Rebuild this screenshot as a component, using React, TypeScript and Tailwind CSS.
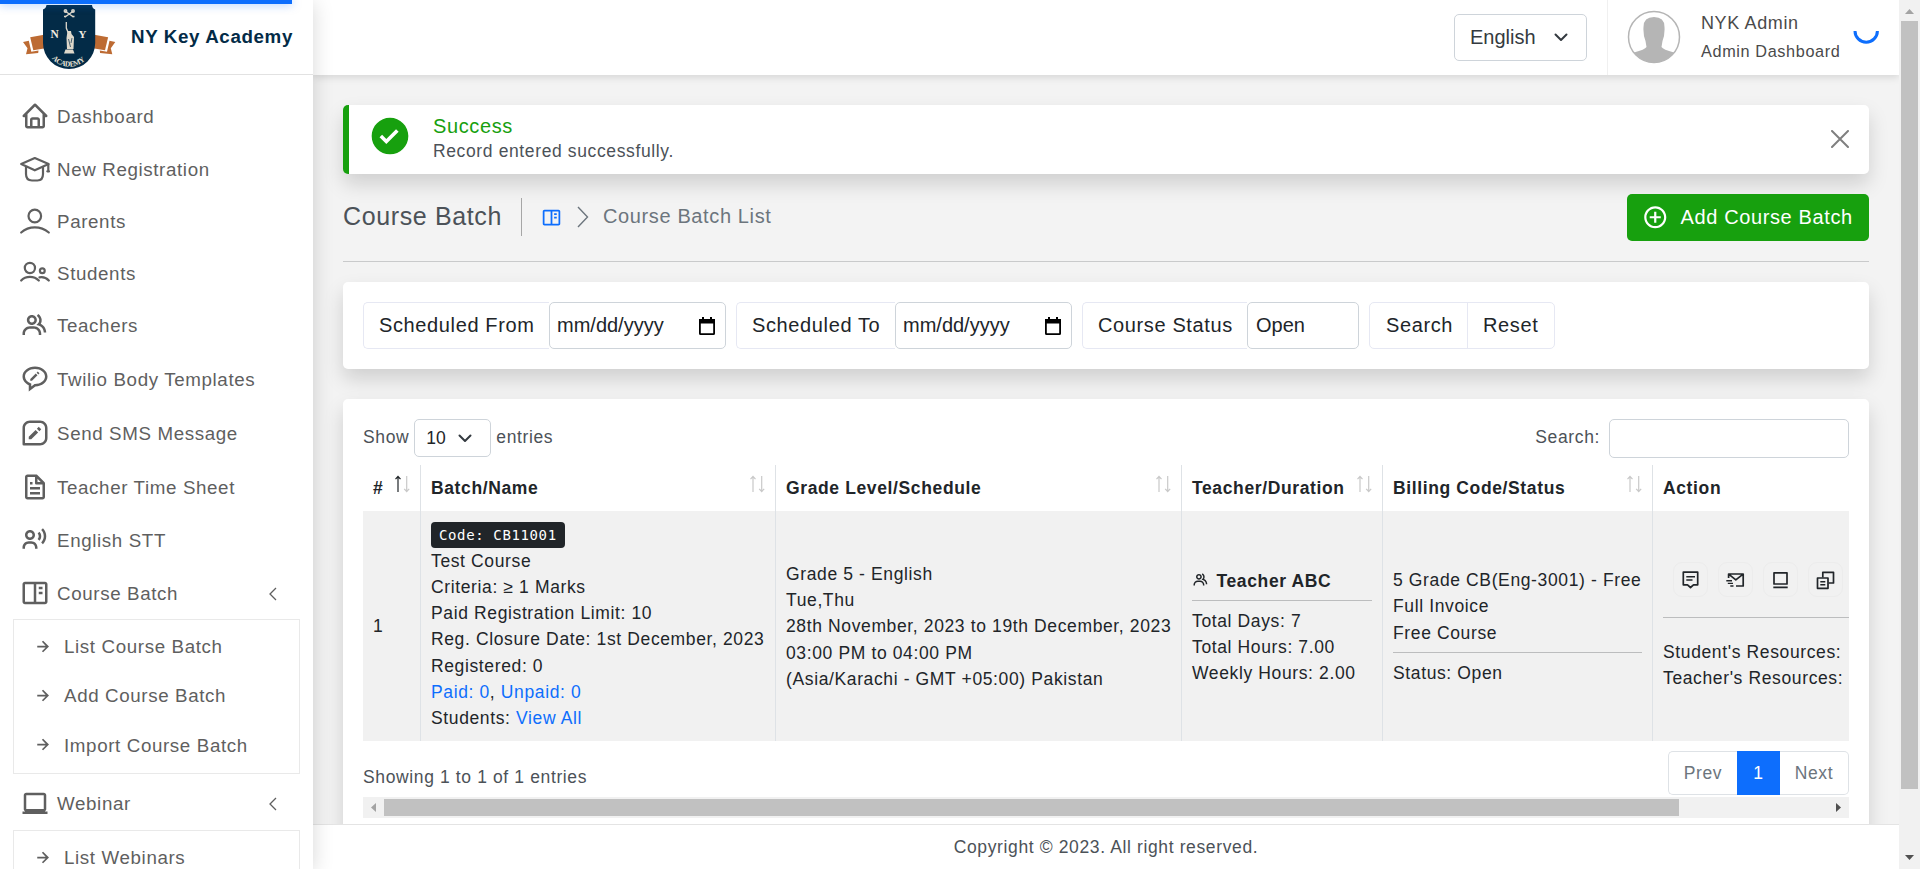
import type { ReactNode } from 'react';
import {
  BiHome,
  BiGroup,
  BiFile,
  BiUserVoice,
  BiBookContent,
  BiLaptop,
  BiRightArrowAlt,
  BiSolidCheckCircle,
  BiPlusCircle,
} from 'react-icons/bi';

const SHADOW = 'shadow-[0_10px_20px_rgba(0,0,0,0.15)]';

function Ribbon() {
  return (
    <g fill="#bd6b33">
      <path d="M8.200 32.300 L22 29.700 V43.500 L11.300 45.200Z" />
      <path d="M1 37 L6.800 35.800 L9.300 46.800 L16.500 45.600 L16.200 48 L4 49.300 L5.500 43.300Z" />
    </g>
  );
}

function Logo() {
  return (
    <svg width="95" height="66" viewBox="0 0 95 66" className="block">
      <Ribbon />
      <g transform="translate(94.3 0) scale(-1 1)">
        <Ribbon />
      </g>
      <path d="M24.500 0 H70 Q70.300 3.500 73.200 4.500 V38 A26.100 26 0 0 1 21 38 V4.500 Q24 3.500 24.500 0Z" fill="#032b47" />
      <g stroke="#ded8cb" fill="none" strokeWidth="1.500">
        <path d="M43 6 L51.500 12 M51.500 6 L43 12" />
        <circle cx="43.500" cy="6" r="1.200" />
        <circle cx="51" cy="6" r="1.200" />
        <path d="M42 11.500 h2 M50.500 11.500 h2" />
        <path d="M44.300 17 v6 l2 5" strokeWidth="1.300" />
      </g>
      <path d="M45.500 26 l3.500 0 l0.500 3 l2.500 3 l-0.500 12 h-6.500 l-0.500 -11z" fill="#ded8cb" />
      <path d="M43.500 44.500 h7.500 l1.500 4 h-10.500z" fill="#ded8cb" />
      <path d="M46.500 34 l2 8 M50 33 l-1 5" stroke="#032b47" strokeWidth="0.700" />
      <text x="28.500" y="33" fontFamily="Liberation Serif, serif" fontWeight="700" fontSize="11.500" fill="#f1ece0" letterSpacing="0">N</text>
      <text x="56.500" y="33" fontFamily="Liberation Serif, serif" fontWeight="700" fontSize="11" fill="#f1ece0" letterSpacing="0">Y</text>
      <path id="logo-arc" d="M30 53.500 A21.500 20 0 0 0 64.500 53.500" fill="none" />
      <text fontFamily="Liberation Serif, serif" fontWeight="700" fontSize="7.500" fill="#e6e1d5" letterSpacing="0">
        <textPath href="#logo-arc" startOffset="0" textLength="37">ACADEMY</textPath>
      </text>
    </svg>
  );
}

function LineIcon({ children }: { children: ReactNode }) {
  return (
    <svg width="30" height="30" viewBox="0 0 30 30" fill="none" stroke="currentColor" strokeWidth="2.200" strokeLinecap="round" strokeLinejoin="round">
      {children}
    </svg>
  );
}

const Cap = () => (
  <LineIcon>
    <path d="M1.200 10 L14.800 4 L28.600 10 L14.800 16.300Z" />
    <path d="M6 13 V20 Q6 26.500 12 26.500 H17.500 Q23 26.500 23 20 V13" />
    <path d="M28.300 10.500 V16.500 M27.300 17.300 H29" />
  </LineIcon>
);
const Parent = () => (
  <LineIcon>
    <circle cx="14.800" cy="10" r="6.300" />
    <path d="M1.200 26.500 Q7 21.300 14.800 21.300 Q22.600 21.300 28.800 26.500" />
  </LineIcon>
);
const Pupils = () => (
  <LineIcon>
    <circle cx="9.900" cy="10" r="5.100" />
    <circle cx="22.300" cy="12.700" r="2.400" />
    <path d="M1.200 22.500 Q4.500 18.800 9.900 18.800 Q15.300 18.800 18.800 22.500" />
    <path d="M19.500 19.300 Q25 18.300 28.800 22.500" />
  </LineIcon>
);
const BubbleEdit = () => (
  <svg width="30" height="30" viewBox="0 0 24 24" fill="currentColor">
    <path d="M12 2C6.486 2 2 5.589 2 10c0 2.908 1.898 5.515 5 6.934V22l5.340-4.004C17.697 17.852 22 14.320 22 10c0-4.411-4.486-8-10-8zm0 14h-.333L9 18v-2.417l-.641-.247C5.671 14.301 4 12.256 4 10c0-3.309 3.589-6 8-6s8 2.691 8 6-3.589 6-8 6z" />
    <path d="M8.200 13.300v-1.400l4.400-4.400 1.400 1.400-4.400 4.400zM13.300 6.900l.9-.9 1.400 1.400-.9.9z" />
  </svg>
);
const SquareEdit = () => (
  <svg width="30" height="30" viewBox="0 0 24 24" fill="currentColor">
    <path d="M16 2H8C4.691 2 2 4.691 2 8v13a1 1 0 0 0 1 1h13c3.309 0 6-2.691 6-6V8c0-3.309-2.691-6-6-6zm4 14c0 2.206-1.794 4-4 4H4V8c0-2.206 1.794-4 4-4h8c2.206 0 4 1.794 4 4v8z" />
    <path d="M7 15v2h2l5.500-5.500-2-2zM13.500 8.500l1.500-1.500 2 2-1.500 1.500z" />
  </svg>
);

type Item = { label: string; icon: ReactNode; box: string };
const items: Item[] = [
  { label: 'Dashboard', icon: <BiHome size={30} />, box: 'h-[53px]' },
  { label: 'New Registration', icon: <Cap />, box: 'h-[52.5px]' },
  { label: 'Parents', icon: <Parent />, box: 'h-[51.5px]' },
  { label: 'Students', icon: <Pupils />, box: 'h-[52.5px]' },
  { label: 'Teachers', icon: <BiGroup size={30} />, box: 'h-[52px]' },
  { label: 'Twilio Body Templates', icon: <BubbleEdit />, box: 'h-[56px]' },
  { label: 'Send SMS Message', icon: <SquareEdit />, box: 'h-[52px]' },
  { label: 'Teacher Time Sheet', icon: <BiFile size={30} />, box: 'h-[55.5px]' },
  { label: 'English STT', icon: <BiUserVoice size={30} />, box: 'h-[51px]' },
];

function NavRow({ label, icon, box, chevron }: Item & { chevron?: boolean }) {
  return (
    <div className={`flex shrink-0 items-center pr-9 pl-5 ${box}`}>
      <span className="mb-px w-[37px] shrink-0">{icon}</span>
      <span className={chevron ? 'grow whitespace-nowrap' : 'grow pt-[2px] whitespace-nowrap'}>{label}</span>
      {chevron && (
        <svg width="9" height="14" viewBox="0 0 9 14" fill="none" stroke="currentColor" strokeWidth="1.300">
          <path d="M8 1 L2 7 L8 13" />
        </svg>
      )}
    </div>
  );
}

function SubMenu({ labels }: { labels: string[] }) {
  return (
    <div className="mr-[13px] ml-[13px] shrink-0 border border-[#e9e9e9] pt-[2px] pb-[3px]">
      {labels.map((l) => (
        <div key={l} className="flex h-[49.4px] items-center pl-[18px]">
          <BiRightArrowAlt size={21} className="mr-[11px]" />
          <span className="pt-[2px]">{l}</span>
        </div>
      ))}
    </div>
  );
}

function Chevron() {
  return (
    <svg width="14" height="9" viewBox="0 0 14 9" fill="none" stroke="#343a40" strokeWidth="2" strokeLinecap="round" strokeLinejoin="round">
      <path d="M1.500 1.500 L7 7 L12.500 1.500" />
    </svg>
  );
}

function Sort({ asc }: { asc?: boolean }) {
  return (
    <svg width="17" height="18" viewBox="0 0 17 18" fill="none" strokeWidth="1.200" className="mt-[-9px] mr-[-1px] shrink-0">
      <path d="M4 17 V1.500 M1.500 4.200 L4 1.500 L6.500 4.200" stroke={asc ? '#212529' : '#c9c9c9'} />
      <path d="M12.700 1 V16.500 M10.200 13.800 L12.700 16.500 L15.200 13.800" stroke="#c9c9c9" />
    </svg>
  );
}

function DateGroup({ label, labelBox }: { label: string; labelBox: string }) {
  return (
    <div className="flex h-[47px]">
      <div className={`flex items-center rounded-l-[5px] border border-r-0 border-[#e6e8f3] pl-[15px] whitespace-nowrap ${labelBox}`}>{label}</div>
      <div className="flex w-[177px] items-center justify-between rounded-[5px] border border-[#ced4da] pr-[10px] pl-[7px] tracking-normal">
        <span>mm/dd/yyyy</span>
        <svg width="16" height="18" viewBox="0 0 16 18">
          <path d="M3 0 h2 v2 h6 v-2 h2 v2 h3 v14.500 a1.500 1.500 0 0 1 -1.500 1.500 h-13 a1.500 1.500 0 0 1 -1.500 -1.500 v-14.500 h3z M1.800 6.500 v9.700 h12.400 v-9.700z" fill="#000" fillRule="evenodd" />
        </svg>
      </div>
    </div>
  );
}

function Th({ children, sort, asc, last }: { children: ReactNode; sort?: boolean; asc?: boolean; last?: boolean }) {
  return (
    <div className={`flex items-center justify-between pr-[10px] pl-[10px] font-bold whitespace-nowrap ${last ? '' : 'border-r border-[#dee2e6]'}`}>
      <span>{children}</span>
      {sort && <Sort asc={asc} />}
    </div>
  );
}

function ActionButton({ children }: { children: ReactNode }) {
  return (
    <span className="flex h-[35px] w-[35px] items-center justify-center rounded-[9px] border border-[#ececec]">
      <svg width="20" height="20" viewBox="0 0 20 20" fill="none" stroke="currentColor" strokeWidth="1.700" strokeLinejoin="round">
        {children}
      </svg>
    </span>
  );
}

export default function App() {
  return (
    <div className="relative flex h-[869px] w-[1920px] overflow-hidden bg-[#f3f3f3] font-['Liberation_Sans',Arial,sans-serif] text-[17.5px] leading-[26.25px] tracking-[0.625px] text-[#4c5258]">
      <div className="absolute top-0 left-0 z-30 h-[4px] w-[292px] bg-[#0d6efd] shadow-[0_0_10px_rgba(13,110,253,0.5)]" />

      <aside className="z-20 flex w-[313px] shrink-0 flex-col overflow-hidden bg-white text-[18.75px] text-[#5f5f5f] shadow-[0_3px_20px_rgba(0,0,0,0.16)]">
        <div className="flex h-[75px] shrink-0 items-start border-b border-[#e2e2e2] pt-[5px] pl-[22px]">
          <Logo />
          <span className="mt-[19px] ml-[14px] font-bold whitespace-nowrap text-[#032b47]">NY Key Academy</span>
        </div>
        <nav className="flex flex-col pt-[15px]">
          {items.map((it) => (
            <NavRow key={it.label} {...it} />
          ))}
          <NavRow label="Course Batch" icon={<BiBookContent size={30} />} box="h-[52.5px] pt-[3px]" chevron />
          <SubMenu labels={['List Course Batch', 'Add Course Batch', 'Import Course Batch']} />
          <NavRow label="Webinar" icon={<BiLaptop size={30} />} box="h-[56px] pt-[5px]" chevron />
          <SubMenu labels={['List Webinars']} />
        </nav>
      </aside>

      <main className="flex w-[1586px] shrink-0 flex-col">
        <header className="z-10 flex h-[75px] shrink-0 justify-end bg-white shadow-[0_2px_8px_rgba(0,0,0,0.13)]">
          <div className="mt-[14px] mr-[20px] flex h-[47px] w-[133px] items-center justify-between rounded-[5px] border border-[#ced4da] pr-[18px] pl-[15px] text-[20px] tracking-normal text-[#343a40]">
            English
            <Chevron />
          </div>
          <div className="flex w-[292px] items-start border-l border-[#f0f0f0] pl-[19px]">
            <svg width="54" height="54" viewBox="0 0 54 54" className="mt-[10px] shrink-0">
              <defs>
                <clipPath id="avatar">
                  <circle cx="27" cy="27" r="25.500" />
                </clipPath>
              </defs>
              <circle cx="27" cy="27" r="25.500" fill="#fff" stroke="#b5b5b5" strokeWidth="1.500" />
              <path clipPath="url(#avatar)" d="M16.500 17 Q16.500 7 27 7 Q37.500 7 37.500 17 Q38 25 35.500 31 L34.500 37 Q36 39.500 47 42.500 V54 H7 V42.500 Q18 39.500 19.500 37 L18.500 31 Q16 25 16.500 17Z" fill="#b5b5b5" />
            </svg>
            <div className="ml-[20px] pt-[10px] whitespace-nowrap text-[#4a4a4a]">
              <div className="text-[18px]">NYK Admin</div>
              <div className="mt-[2px] text-[16.25px]">Admin Dashboard</div>
            </div>
            <svg width="28" height="16" viewBox="0 0 28 16" className="mt-[30px] ml-[12px]">
              <path d="M3 1 A11.200 11.200 0 0 0 25.400 1" fill="none" stroke="#0d6efd" strokeWidth="3" />
            </svg>
          </div>
        </header>

        <div className="flex h-[749px] shrink-0 flex-col overflow-hidden px-[30px] pt-[30px]">
          <div className={`flex h-[69px] shrink-0 items-start rounded-[5px] border-l-[6px] border-[#17a00e] bg-white ${SHADOW}`}>
            <BiSolidCheckCircle size={44} color="#17a00e" className="mt-[9px] ml-[19px]" />
            <div className="mt-[9px] ml-[21px] grow">
              <div className="text-[20px] leading-[24px] text-[#17a00e]">Success</div>
              <div className="leading-[26px]">Record entered successfully.</div>
            </div>
            <svg width="18" height="18" viewBox="0 0 18 18" className="mt-[25px] mr-[20px]" stroke="#7f7f7f" strokeWidth="2" strokeLinecap="round">
              <path d="M1 1 L17 17 M17 1 L1 17" />
            </svg>
          </div>

          <div className="mt-[20px] flex h-[47px] shrink-0 items-center">
            <h1 className="mb-[2px] w-[179px] border-r border-[#a6a6a6] text-[25px] leading-[38px] whitespace-nowrap">
              <span className="relative top-[-1px]">Course Batch</span>
            </h1>
            <BiBookContent size={21} color="#0d6efd" className="mb-px ml-[19px]" />
            <svg width="12" height="22" viewBox="0 0 12 22" className="mb-[2px] ml-[15px]" fill="none" stroke="#6c757d" strokeWidth="1.400">
              <path d="M1 1 L10.500 11 L1 21" />
            </svg>
            <span className="mb-[2px] ml-[14px] grow text-[20px] text-[#6c757d]">Course Batch List</span>
            <button className="flex h-[47px] w-[242px] items-center rounded-[5px] bg-[#17a00e] pl-[15px] text-[20px] whitespace-nowrap text-white">
              <BiPlusCircle size={26.5} className="mr-[12px]" />
              Add Course Batch
            </button>
          </div>
          <div className="mt-[20px] h-px shrink-0 bg-[#c9cacb]" />

          <div className={`mt-[20px] flex h-[87px] shrink-0 items-center gap-[10px] rounded-[5px] bg-white px-[20px] text-[20px] text-[#212529] ${SHADOW}`}>
            <DateGroup label="Scheduled From" labelBox="w-[186px]" />
            <DateGroup label="Scheduled To" labelBox="w-[159px]" />
            <div className="flex h-[47px]">
              <div className="flex w-[165px] items-center rounded-l-[5px] border border-r-0 border-[#e6e8f3] pl-[15px] whitespace-nowrap">Course Status</div>
              <div className="flex w-[112px] items-center rounded-[5px] border border-[#ced4da] pl-2 tracking-normal">Open</div>
            </div>
            <div className="flex h-[47px] items-stretch rounded-[5px] border border-[#e6e8f3]">
              <div className="flex w-[98px] items-center border-r border-[#e6e8f3] pl-[16px]">Search</div>
              <div className="flex w-[86px] items-center pl-[15px]">Reset</div>
            </div>
          </div>

          <div className={`mt-[30px] flex h-[480px] shrink-0 flex-col rounded-[5px] bg-white px-[20px] pt-[20px] ${SHADOW}`}>
            <div className="flex h-[46px] shrink-0 items-start">
              <span className="mt-[5px]">Show</span>
              <div className="mx-[5px] flex h-[38px] w-[77px] items-center justify-between rounded-[5px] border border-[#ced4da] pr-[18px] pl-[11px] tracking-normal text-[#212529]">
                10
                <Chevron />
              </div>
              <span className="mt-[5px] grow">entries</span>
              <span className="mt-[5px]">Search:</span>
              <div className="ml-[9px] h-[39px] w-[240px] rounded-[5px] border border-[#ced4da]" />
            </div>

            <div className="grid h-[46px] shrink-0 grid-cols-[58px_355px_406px_201px_270px_196px] text-[#212529]">
              <Th sort asc>#</Th>
              <Th sort>Batch/Name</Th>
              <Th sort>Grade Level/Schedule</Th>
              <Th sort>Teacher/Duration</Th>
              <Th sort>Billing Code/Status</Th>
              <Th last>Action</Th>
            </div>

            <div className="grid h-[230px] shrink-0 grid-cols-[58px_355px_406px_201px_270px_196px] bg-[#f1f1f1] whitespace-nowrap text-[#212529]">
              <div className="flex items-center border-r border-[#dee2e6] pl-[10px]">1</div>
              <div className="border-r border-[#dee2e6] pt-[10.4px] pl-[10px]">
                <div className="flex h-[26.25px] items-center">
                  <kbd className="mt-[1px] rounded-[4px] bg-[#212529] px-[8px] font-['DejaVu_Sans_Mono',monospace] text-[14px] leading-[26px] text-white">Code: CB11001</kbd>
                </div>
                <div>Test Course</div>
                <div>Criteria: ≥ 1 Marks</div>
                <div>Paid Registration Limit: 10</div>
                <div>Reg. Closure Date: 1st December, 2023</div>
                <div>Registered: 0</div>
                <div>
                  <a className="text-[#0d6efd]">Paid: 0</a>, <a className="text-[#0d6efd]">Unpaid: 0</a>
                </div>
                <div>
                  Students: <a className="text-[#0d6efd]">View All</a>
                </div>
              </div>
              <div className="border-r border-[#dee2e6] pt-[49.8px] pl-[10px]">
                <div>Grade 5 - English</div>
                <div>Tue,Thu</div>
                <div>28th November, 2023 to 19th December, 2023</div>
                <div>03:00 PM to 04:00 PM</div>
                <div>(Asia/Karachi - GMT +05:00) Pakistan</div>
              </div>
              <div className="border-r border-[#dee2e6] px-[10px] pt-[57px]">
                <div className="flex font-bold">
                  <BiGroup size={17.5} className="mt-[3px] mr-[7px]" />
                  Teacher ABC
                </div>
                <div className="mt-[6px] mb-[6.5px] h-px bg-[#bcbdbe]" />
                <div>Total Days: 7</div>
                <div>Total Hours: 7.00</div>
                <div>Weekly Hours: 2.00</div>
              </div>
              <div className="border-r border-[#dee2e6] px-[10px] pt-[56px]">
                <div>5 Grade CB(Eng-3001) - Free</div>
                <div>Full Invoice</div>
                <div>Free Course</div>
                <div className="mt-[6.25px] mb-[7px] h-px bg-[#bcbdbe]" />
                <div>Status: Open</div>
              </div>
              <div className="pt-[51px] pl-[10px]">
                <div className="flex gap-[10px] pl-[10px]">
                  <ActionButton>
                    <path d="M2.300 2.200 H16.700 V14.800 H12.500 L9.500 17.500 L6.500 14.800 H2.300Z" />
                    <path d="M5.300 6.700 H14 M5.300 10 H11.500" strokeWidth="1.500" />
                  </ActionButton>
                  <ActionButton>
                    <path d="M2.600 8 V4 H17.200 V16 H10 M3 4.300 L9.800 9.800 L16.800 4.300" />
                    <path d="M0.300 10.700 H6 M1.800 13.400 H7 M4.300 16 H7.500" strokeWidth="1.400" />
                  </ActionButton>
                  <ActionButton>
                    <path d="M3 2.800 H16 V14 H3Z M2.300 17.300 H16.700" />
                  </ActionButton>
                  <ActionButton>
                    <path d="M6.800 7.500 V2.300 H17.500 V13 H12.500" />
                    <path d="M1.500 8 H12 V18.300 H1.500Z" />
                    <path d="M4.300 11.700 H9.300 M4.300 14.700 H9.300" strokeWidth="1.400" />
                  </ActionButton>
                </div>
                <div className="mt-[20px] mb-[20.5px] h-px bg-[#bcbdbe]" />
                <div>Student's Resources:</div>
                <div>Teacher's Resources:</div>
              </div>
            </div>

            <div className="flex h-[56px] shrink-0 items-start justify-between pt-[10px]">
              <span className="mt-[13px]">Showing 1 to 1 of 1 entries</span>
              <div className="flex h-[44px] w-[181px] text-[#6c757d]">
                <span className="flex w-[69px] items-center justify-center rounded-l-[5px] border border-r-0 border-[#dee2e6]">Prev</span>
                <span className="flex w-[43px] items-center justify-center bg-[#0d6efd] text-white">1</span>
                <span className="flex w-[69px] items-center justify-center rounded-r-[5px] border border-l-0 border-[#dee2e6]">Next</span>
              </div>
            </div>

            <div className="flex h-[21px] shrink-0 items-center bg-[#f1f1f1]">
              <svg width="21" height="21" viewBox="0 0 21 21">
                <path d="M13 6 V15 L8 10.500Z" fill="#a3a3a3" />
              </svg>
              <div className="h-[17px] w-[1295px] bg-[#c1c1c1]" />
              <svg width="21" height="21" viewBox="0 0 21 21" className="ml-auto">
                <path d="M8 6 V15 L13 10.500Z" fill="#505050" />
              </svg>
            </div>
          </div>
        </div>

        <footer className="z-10 flex h-[45px] shrink-0 items-center justify-center border-t border-[#e4e4e4] bg-white">Copyright © 2023. All right reserved.</footer>
      </main>

      <div className="z-20 flex w-[21px] shrink-0 flex-col items-center bg-[#f1f1f1]">
        <svg width="21" height="21" viewBox="0 0 21 21" className="shrink-0">
          <path d="M6 14 H15 L10.500 9Z" fill="#a3a3a3" />
        </svg>
        <div className="h-[768px] w-[17px] shrink-0 bg-[#c1c1c1]" />
        <svg width="21" height="21" viewBox="0 0 21 21" className="mt-auto mb-px shrink-0">
          <path d="M6 8 H15 L10.500 13Z" fill="#505050" />
        </svg>
      </div>
    </div>
  );
}
